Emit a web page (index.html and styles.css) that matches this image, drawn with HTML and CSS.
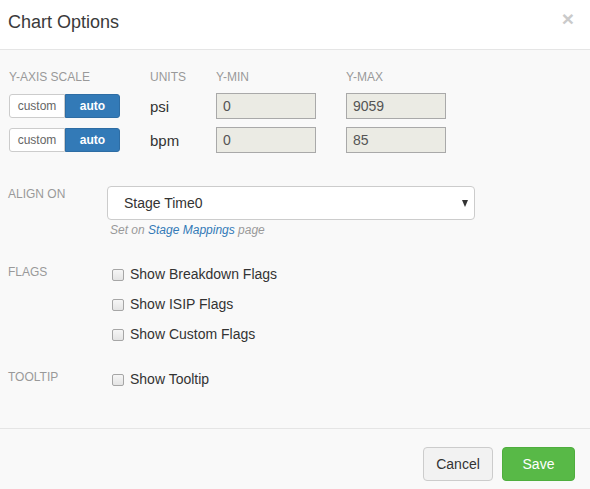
FILE: index.html
```html
<!DOCTYPE html>
<html>
<head>
<meta charset="utf-8">
<link rel="stylesheet" href="styles.css">
</head>
<body>
<div class="modal">
  <div class="modal-header">
    <h4 class="modal-title">Chart Options</h4>
    <span class="close">×</span>
  </div>
  <div class="modal-body">
    <div class="scale-grid">
      <div class="col-label">Y-AXIS SCALE</div>
      <div class="col-label">UNITS</div>
      <div class="col-label">Y-MIN</div>
      <div class="col-label">Y-MAX</div>

      <div class="btn-group"><span class="seg">custom</span><span class="seg active">auto</span></div>
      <div class="unit">psi</div>
      <div class="field">0</div>
      <div class="field">9059</div>

      <div class="btn-group"><span class="seg">custom</span><span class="seg active">auto</span></div>
      <div class="unit">bpm</div>
      <div class="field">0</div>
      <div class="field">85</div>
    </div>

    <div class="form-row align-row">
      <div class="row-label">ALIGN ON</div>
      <div class="row-control">
        <div class="select">
          <span>Stage Time0</span>
          <span class="caret"></span>
        </div>
        <div class="help">Set on <a class="link">Stage Mappings</a> page</div>
      </div>
    </div>

    <div class="form-row flags-row">
      <div class="row-label">FLAGS</div>
      <div class="row-control checks">
        <label class="check"><span class="box"></span>Show Breakdown Flags</label>
        <label class="check"><span class="box"></span>Show ISIP Flags</label>
        <label class="check"><span class="box"></span>Show Custom Flags</label>
      </div>
    </div>

    <div class="form-row tooltip-row">
      <div class="row-label">TOOLTIP</div>
      <div class="row-control checks">
        <label class="check"><span class="box"></span>Show Tooltip</label>
      </div>
    </div>
  </div>
  <div class="modal-footer">
    <button class="btn btn-default">Cancel</button>
    <button class="btn btn-success">Save</button>
  </div>
</div>
</body>
</html>
```

FILE: styles.css
```css
* { box-sizing: border-box; }
html, body { margin: 0; padding: 0; }
body {
  font-family: "Liberation Sans", Arial, sans-serif;
  font-size: 14px;
  color: #333;
  background: #fff;
}
.modal {
  width: 590px;
  height: 489px;
  display: flex;
  flex-direction: column;
}
.modal-header {
  height: 50px;
  background: #fff;
  border-bottom: 1px solid #e5e5e5;
  display: flex;
  justify-content: space-between;
  align-items: flex-start;
  padding: 10px 16px 0 8px;
}
.modal-title {
  margin: 0;
  font-size: 18px;
  font-weight: normal;
  line-height: 25px;
  color: #3a3a3a;
}
.close {
  font-size: 21px;
  font-weight: bold;
  line-height: 17px;
  color: #cacaca;
}
.modal-body {
  height: 378px;
  background: #f9f9f9;
  padding: 19px 8px 0 8px;
}
.scale-grid {
  display: grid;
  grid-template-columns: 141px 66px 130px 100px;
  grid-template-rows: 16px 26px 26px;
  row-gap: 8px;
  align-items: center;
  margin-left: 1px;
}
.col-label, .row-label {
  font-size: 12px;
  line-height: 16px;
  color: #999;
  text-transform: uppercase;
}
.btn-group {
  display: flex;
  height: 24px;
  width: 111px;
}
.seg {
  display: flex;
  align-items: center;
  justify-content: center;
  font-size: 12px;
  height: 24px;
  border: 1px solid #ccc;
  background: #fff;
  color: #666;
  width: 56px;
  border-radius: 3px 0 0 3px;
}
.seg.active {
  width: 55px;
  background: #337ab7;
  border-color: #2e6da4;
  color: #fff;
  font-weight: bold;
  border-radius: 0 3px 3px 0;
}
.unit {
  font-size: 15px;
  color: #333;
  padding-top: 1px;
}
.field {
  width: 100px;
  height: 26px;
  background: #ebebe4;
  border: 1px solid #a9a9a9;
  padding: 0 6px;
  font-size: 14px;
  line-height: 24px;
  color: #545454;
}
.form-row {
  display: grid;
  grid-template-columns: 99px 368px;
}
.align-row { margin-top: 33px; }
.flags-row { margin-top: 26px; }
.tooltip-row { margin-top: 25px; }
.select {
  height: 34px;
  background: #fff;
  border: 1px solid #ccc;
  border-radius: 4px;
  display: flex;
  align-items: center;
  justify-content: space-between;
  padding: 0 6px 0 16px;
  font-size: 14px;
  color: #333;
}
.caret {
  width: 0;
  height: 0;
  border-left: 3.5px solid transparent;
  border-right: 3.5px solid transparent;
  border-top: 7px solid #333;
}
.help {
  margin: 2px 0 0 3px;
  font-size: 12px;
  line-height: 16px;
  font-style: italic;
  color: #999;
}
.link { color: #337ab7; text-decoration: none; }
.checks {
  display: flex;
  flex-direction: column;
  gap: 10px;
  padding-left: 5px;
}
.check {
  display: flex;
  align-items: center;
  gap: 6px;
  font-size: 14px;
  line-height: 20px;
  color: #333;
}
.box {
  width: 12px;
  height: 12px;
  border: 1px solid #a6a6a6;
  border-radius: 2px;
  background: linear-gradient(#f6f6f6, #e4e4e4);
  margin-top: 1px;
}
.modal-footer {
  flex: 1;
  background: #f9f9f9;
  border-top: 1px solid #e5e5e5;
  display: flex;
  justify-content: flex-end;
  align-items: flex-start;
  gap: 9px;
  padding: 18px 15px 0 0;
}
.btn {
  height: 34px;
  font-family: "Liberation Sans", Arial, sans-serif;
  font-size: 14px;
  border-radius: 4px;
  border: 1px solid #ccc;
  padding: 0 12px;
  cursor: pointer;
}
.btn-default {
  width: 70px;
  background: #f2f2f2;
  color: #333;
}
.btn-success {
  width: 73px;
  background: #58b947;
  border-color: #4fae3e;
  color: #fff;
}
```
